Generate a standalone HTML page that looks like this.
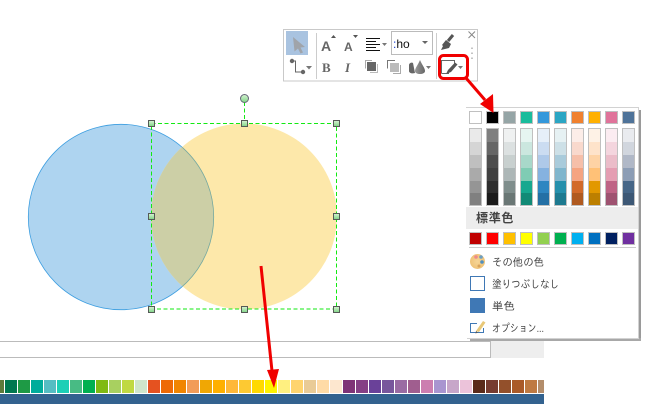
<!DOCTYPE html>
<html><head><meta charset="utf-8"><style>
html,body{margin:0;padding:0;background:#fff;width:666px;height:404px;overflow:hidden}
svg{display:block}
.jp{font-family:"Liberation Sans","IPAGothic","Noto Sans CJK JP",sans-serif;font-size:11px;fill:#444}
</style></head><body>
<svg width="666" height="404" viewBox="0 0 666 404" xmlns="http://www.w3.org/2000/svg" shape-rendering="geometricPrecision">
<defs>
<clipPath id="oy"><circle cx="244" cy="216.5" r="93"/></clipPath>
<linearGradient id="h" x1="0" y1="0" x2="0" y2="1"><stop offset="0" stop-color="#d8f3d4"/><stop offset="1" stop-color="#7fd486"/></linearGradient>
<linearGradient id="dr" x1="0" y1="0" x2="1" y2="0"><stop offset="0" stop-color="#999"/><stop offset="1" stop-color="#666"/></linearGradient>
<radialGradient id="pal" cx=".5" cy=".5" r=".6"><stop offset="0" stop-color="#f6d596"/><stop offset="1" stop-color="#eebf72"/></radialGradient>
</defs>

<!-- bottom area -->
<path d="M0 341.5H490.5V357.5H0" fill="none" stroke="#bbb" stroke-width="1"/>
<rect x="491" y="341" width="53" height="17" fill="#eeeeee"/>
<rect x="0" y="394" width="544" height="10" fill="#33628f"/>
<g>
<rect x="0" y="380" width="4" height="13" fill="#5d7a3a"/>
<rect x="5" y="380" width="12" height="13" fill="#00784f"/>
<rect x="18" y="380" width="12" height="13" fill="#1e9a45"/>
<rect x="31" y="380" width="12" height="13" fill="#00ac9b"/>
<rect x="44" y="380" width="12" height="13" fill="#55bdc3"/>
<rect x="57" y="380" width="12" height="13" fill="#1ccfb6"/>
<rect x="70" y="380" width="12" height="13" fill="#48bb84"/>
<rect x="83" y="380" width="12" height="13" fill="#00b050"/>
<rect x="96" y="380" width="12" height="13" fill="#80ba12"/>
<rect x="109" y="380" width="12" height="13" fill="#a8d060"/>
<rect x="122" y="380" width="12" height="13" fill="#c0d943"/>
<rect x="135" y="380" width="12" height="13" fill="#cfe6cb"/>
<rect x="148" y="380" width="12" height="13" fill="#e55220"/>
<rect x="161" y="380" width="12" height="13" fill="#ee6a05"/>
<rect x="174" y="380" width="12" height="13" fill="#f18500"/>
<rect x="187" y="380" width="12" height="13" fill="#f29c58"/>
<rect x="200" y="380" width="12" height="13" fill="#f0a704"/>
<rect x="213" y="380" width="12" height="13" fill="#ffb000"/>
<rect x="226" y="380" width="12" height="13" fill="#ffb838"/>
<rect x="239" y="380" width="12" height="13" fill="#fdc932"/>
<rect x="252" y="380" width="12" height="13" fill="#ffd900"/>
<rect x="265" y="380" width="12" height="13" fill="#fff200"/>
<rect x="278" y="380" width="12" height="13" fill="#fff080"/>
<rect x="291" y="380" width="12" height="13" fill="#ffd46e"/>
<rect x="304" y="380" width="12" height="13" fill="#e9cb96"/>
<rect x="317" y="380" width="12" height="13" fill="#ffdba6"/>
<rect x="330" y="380" width="12" height="13" fill="#fde7cf"/>
<rect x="343" y="380" width="12" height="13" fill="#7f3377"/>
<rect x="356" y="380" width="12" height="13" fill="#853f85"/>
<rect x="369" y="380" width="12" height="13" fill="#6a4199"/>
<rect x="382" y="380" width="12" height="13" fill="#78569c"/>
<rect x="395" y="380" width="12" height="13" fill="#9a6ba3"/>
<rect x="408" y="380" width="12" height="13" fill="#a05e8f"/>
<rect x="421" y="380" width="12" height="13" fill="#cc7eb0"/>
<rect x="434" y="380" width="12" height="13" fill="#a995d0"/>
<rect x="447" y="380" width="12" height="13" fill="#c7a6c9"/>
<rect x="460" y="380" width="12" height="13" fill="#ecc3da"/>
<rect x="473" y="380" width="12" height="13" fill="#5a2a1a"/>
<rect x="486" y="380" width="12" height="13" fill="#763b30"/>
<rect x="499" y="380" width="12" height="13" fill="#93502b"/>
<rect x="512" y="380" width="12" height="13" fill="#aa5a28"/>
<rect x="525" y="380" width="12" height="13" fill="#bf7a42"/>
<rect x="538" y="380" width="6" height="13" fill="#b38d6b"/>
</g>

<!-- circles -->
<circle cx="121" cy="217" r="92.7" fill="#aed4f0" stroke="#3d9ee0" stroke-width=".8"/>
<circle cx="244" cy="216.5" r="93" fill="#fde8aa"/>
<g clip-path="url(#oy)">
<circle cx="121" cy="217" r="93" fill="#cccfa6"/>
<circle cx="121" cy="217" r="92.7" fill="none" stroke="#76a9a0" stroke-width=".8"/>
</g>

<!-- selection -->
<g fill="none" stroke="#12ea12" stroke-width="1" stroke-dasharray="4 2.5">
<path d="M151.5 123.5H336.5V309H151.5Z" shape-rendering="crispEdges"/>
<path d="M244.5 102V123" shape-rendering="crispEdges"/>
</g>
<circle cx="244.5" cy="98.5" r="4" fill="url(#h)" stroke="#667"/>
<g fill="url(#h)" stroke="#555a56" stroke-width="1" shape-rendering="crispEdges">
<rect x="148.5" y="120.5" width="6" height="6"/>
<rect x="241.5" y="120.5" width="6" height="6"/>
<rect x="333.5" y="120.5" width="6" height="6"/>
<rect x="148.5" y="213.5" width="6" height="6"/>
<rect x="333.5" y="213.5" width="6" height="6"/>
<rect x="148.5" y="306.5" width="6" height="6"/>
<rect x="241.5" y="306.5" width="6" height="6"/>
<rect x="333.5" y="306.5" width="6" height="6"/>
</g>

<!-- toolbar -->
<rect x="283.500" y="29.500" width="194" height="51.500" fill="#fff" stroke="#c9c9c9"/>
<rect x="286" y="31" width="22" height="24" fill="#a9c3e0"/>
<path d="M293 37L305 47L300.500 47.500L303 52.500L300.500 53.500L298 48.500L294.500 51.500Z" fill="#a0a4aa"/>
<path d="M316.500 33V79M436.500 33V79" stroke="#ccc" stroke-width="1"/>
<!-- A A -->
<text x="321" y="51" font-family="'Liberation Sans',sans-serif" font-weight="bold" font-size="14" fill="#666">A</text>
<path d="M331 38H336L333.500 35Z" fill="#555"/>
<text x="344" y="51" font-family="'Liberation Sans',sans-serif" font-weight="bold" font-size="12" fill="#666">A</text>
<path d="M353 35H358L355.500 38Z" fill="#555"/>
<!-- align -->
<path d="M366 38.500H380M366 41.500H376M366 44.500H380M366 47.500H376M366 50.500H380" stroke="#111" stroke-width="1"/>
<path d="M382 43H387L384.500 46Z" fill="#777"/>
<!-- combo -->
<rect x="391.500" y="31.500" width="41" height="23" fill="#fff" stroke="#bbb"/>
<text x="393" y="48" font-family="'Liberation Sans',sans-serif" font-size="12" fill="#111"><tspan fill="#1a3fd0">:</tspan>ho</text>
<path d="M422 41H428L425 44Z" fill="#666"/>
<!-- brush -->
<path d="M446 40L451 44L449 48L441 50L443 46L442 45Z" fill="#555"/>
<path d="M448 41L453 35" stroke="#555" stroke-width="3"/>
<!-- close and grip -->
<path d="M468.500 31.500L475 38M475 31.500L468.500 38" stroke="#888" stroke-width="1"/>
<path d="M472 47.500V49M472 52.500V54M472 57.500V59" stroke="#c4c4c4" stroke-width="2"/>
<!-- connector -->
<circle cx="292" cy="61" r="2.200" fill="#666"/>
<circle cx="303" cy="72" r="2.200" fill="#666"/>
<path d="M292 61H295.500V72H303" fill="none" stroke="#666"/>
<path d="M306 66H312L309 69.500Z" fill="#777"/>
<!-- B I -->
<text x="322" y="72" font-family="'Liberation Serif',serif" font-weight="bold" font-size="13" fill="#666">B</text>
<text x="345" y="72" font-family="'Liberation Serif',serif" font-weight="bold" font-style="italic" font-size="13" fill="#666">I</text>
<!-- layers -->
<path d="M365.500 68.500V60.500H372" fill="none" stroke="#aaa"/>
<rect x="367" y="62" width="9" height="9" fill="#666"/>
<path d="M377.500 64V72.500H370" fill="none" stroke="#bbb"/>
<path d="M387.500 68.500V60.500H395" fill="none" stroke="#777"/>
<rect x="390" y="63" width="9" height="9" fill="#bbb"/>
<path d="M400.500 65V73.500H393" fill="none" stroke="#aaa"/>
<!-- drops -->
<path d="M409 65C409 63 412 62 413 63L415 73C412 74 409 73 409 71Z" fill="#666"/>
<path d="M420 60C418 65 415 68 415 71C415 75 425 75 425 71C425 68 422 65 420 60Z" fill="url(#dr)"/>
<path d="M426 66H431L428.500 69Z" fill="#777"/>
<!-- fill icon -->
<path d="M441.500 73.500V60.500H454.500V64" fill="none" stroke="#666"/>
<path d="M441.500 73.500H449" fill="none" stroke="#666"/>
<path d="M448 70L455 62.500L457.500 64.500L451 72L446 74Z" fill="#555"/>
<path d="M458 66H463L460.500 69Z" fill="#777"/>

<!-- menu -->
<rect x="639" y="110" width="2" height="231" fill="#9a9a9a"/>
<rect x="470" y="338" width="171" height="3" fill="#a8a8a8"/>
<rect x="466" y="107" width="173" height="232" fill="#fff"/>
<path d="M466 107.500H638.500V338.500H467" fill="none" stroke="#d2d2d2"/>
<rect x="466" y="207" width="172" height="22" fill="#ededed"/>
<path d="M469 247.500H636" stroke="#ccc"/>

<g stroke="#c0c0c0" stroke-width="1">
<rect x="469.500" y="111.500" width="12" height="12" fill="#ffffff"/>
<rect x="486.500" y="111.500" width="12" height="12" fill="#000000"/>
<rect x="503.500" y="111.500" width="12" height="12" fill="#95a5a6"/>
<rect x="520.500" y="111.500" width="12" height="12" fill="#1abc9c"/>
<rect x="537.500" y="111.500" width="12" height="12" fill="#3498db"/>
<rect x="554.500" y="111.500" width="12" height="12" fill="#2ba6c4"/>
<rect x="571.500" y="111.500" width="12" height="12" fill="#f0812f"/>
<rect x="588.500" y="111.500" width="12" height="12" fill="#ffb000"/>
<rect x="605.500" y="111.500" width="12" height="12" fill="#e0739a"/>
<rect x="622.500" y="111.500" width="12" height="12" fill="#4f7399"/>

<rect x="469.500" y="232.500" width="12" height="12" fill="#c00000"/>
<rect x="486.500" y="232.500" width="12" height="12" fill="#ff0000"/>
<rect x="503.500" y="232.500" width="12" height="12" fill="#ffc000"/>
<rect x="520.500" y="232.500" width="12" height="12" fill="#ffff00"/>
<rect x="537.500" y="232.500" width="12" height="12" fill="#92d050"/>
<rect x="554.500" y="232.500" width="12" height="12" fill="#00b050"/>
<rect x="571.500" y="232.500" width="12" height="12" fill="#00b0f0"/>
<rect x="588.500" y="232.500" width="12" height="12" fill="#0070c0"/>
<rect x="605.500" y="232.500" width="12" height="12" fill="#002060"/>
<rect x="622.500" y="232.500" width="12" height="12" fill="#7030a0"/>
</g>

<!-- shade columns -->
<g shape-rendering="crispEdges">
<rect x="469" y="128" width="13" height="78" fill="#c0c0c0"/><rect x="486" y="128" width="13" height="78" fill="#c0c0c0"/><rect x="503" y="128" width="13" height="78" fill="#c0c0c0"/><rect x="520" y="128" width="13" height="78" fill="#c0c0c0"/><rect x="537" y="128" width="13" height="78" fill="#c0c0c0"/><rect x="554" y="128" width="13" height="78" fill="#c0c0c0"/><rect x="571" y="128" width="13" height="78" fill="#c0c0c0"/><rect x="588" y="128" width="13" height="78" fill="#c0c0c0"/><rect x="605" y="128" width="13" height="78" fill="#c0c0c0"/><rect x="622" y="128" width="13" height="78" fill="#c0c0c0"/>

<rect x="470" y="129" width="11" height="13" fill="#eaeaea"/><rect x="470" y="142" width="11" height="13" fill="#d5d5d5"/><rect x="470" y="155" width="11" height="13" fill="#bfbfbf"/><rect x="470" y="168" width="11" height="13" fill="#aaaaaa"/><rect x="470" y="181" width="11" height="12" fill="#959595"/><rect x="470" y="193" width="11" height="12" fill="#808080"/>
<rect x="487" y="129" width="11" height="13" fill="#7f7f7f"/><rect x="487" y="142" width="11" height="13" fill="#666666"/><rect x="487" y="155" width="11" height="13" fill="#4d4d4d"/><rect x="487" y="168" width="11" height="13" fill="#404040"/><rect x="487" y="181" width="11" height="12" fill="#2d2d2d"/><rect x="487" y="193" width="11" height="12" fill="#1a1a1a"/>
<rect x="504" y="129" width="11" height="13" fill="#eff1f1"/><rect x="504" y="142" width="11" height="13" fill="#dce1e1"/><rect x="504" y="155" width="11" height="13" fill="#c8d0cf"/><rect x="504" y="168" width="11" height="13" fill="#adb7b7"/><rect x="504" y="181" width="11" height="12" fill="#7f8e8c"/><rect x="504" y="193" width="11" height="12" fill="#6a7775"/>
<rect x="521" y="129" width="11" height="13" fill="#e6f5f1"/><rect x="521" y="142" width="11" height="13" fill="#cbe7df"/><rect x="521" y="155" width="11" height="13" fill="#a8d8ca"/><rect x="521" y="168" width="11" height="13" fill="#7fccb4"/><rect x="521" y="181" width="11" height="12" fill="#17a88f"/><rect x="521" y="193" width="11" height="12" fill="#128a76"/>
<rect x="538" y="129" width="11" height="13" fill="#e6eff9"/><rect x="538" y="142" width="11" height="13" fill="#cbdcf1"/><rect x="538" y="155" width="11" height="13" fill="#aec9e9"/><rect x="538" y="168" width="11" height="13" fill="#85b2e0"/><rect x="538" y="181" width="11" height="12" fill="#2e86c1"/><rect x="538" y="193" width="11" height="12" fill="#2470a5"/>
<rect x="555" y="129" width="11" height="13" fill="#e6f1f3"/><rect x="555" y="142" width="11" height="13" fill="#cde0e7"/><rect x="555" y="155" width="11" height="13" fill="#a9cbdb"/><rect x="555" y="168" width="11" height="13" fill="#80b6cd"/><rect x="555" y="181" width="11" height="12" fill="#2690ac"/><rect x="555" y="193" width="11" height="12" fill="#1e7a90"/>
<rect x="572" y="129" width="11" height="13" fill="#fcede8"/><rect x="572" y="142" width="11" height="13" fill="#f9d9cd"/><rect x="572" y="155" width="11" height="13" fill="#f6bfa9"/><rect x="572" y="168" width="11" height="13" fill="#f5a481"/><rect x="572" y="181" width="11" height="12" fill="#d26a2a"/><rect x="572" y="193" width="11" height="12" fill="#b05a20"/>
<rect x="589" y="129" width="11" height="13" fill="#fef2e6"/><rect x="589" y="142" width="11" height="13" fill="#fee3ca"/><rect x="589" y="155" width="11" height="13" fill="#fed3a5"/><rect x="589" y="168" width="11" height="13" fill="#ffc177"/><rect x="589" y="181" width="11" height="12" fill="#e29800"/><rect x="589" y="193" width="11" height="12" fill="#bc7f00"/>
<rect x="606" y="129" width="11" height="13" fill="#fbecf1"/><rect x="606" y="142" width="11" height="13" fill="#f4d5de"/><rect x="606" y="155" width="11" height="13" fill="#ebbcc9"/><rect x="606" y="168" width="11" height="13" fill="#e49db2"/><rect x="606" y="181" width="11" height="12" fill="#bf6385"/><rect x="606" y="193" width="11" height="12" fill="#9e5270"/>
<rect x="623" y="129" width="11" height="13" fill="#e9ebef"/><rect x="623" y="142" width="11" height="13" fill="#d1d6de"/><rect x="623" y="155" width="11" height="13" fill="#b0b8c7"/><rect x="623" y="168" width="11" height="13" fill="#8c9db5"/><rect x="623" y="181" width="11" height="12" fill="#466687"/><rect x="623" y="193" width="11" height="12" fill="#3d5875"/>
</g>

<text x="476" y="222" font-family="'Liberation Sans','Noto Sans CJK JP',sans-serif" font-weight="bold" font-size="12" letter-spacing=".7" fill="#444">標準色</text>

<!-- menu items -->
<ellipse cx="477.500" cy="261.500" rx="7.500" ry="7.500" fill="url(#pal)"/>
<circle cx="476" cy="257" r="1.800" fill="#ee8a8a"/><circle cx="481" cy="257" r="1.800" fill="#6b9fc4"/><circle cx="482" cy="262" r="1.800" fill="#4f8fc0"/><circle cx="479" cy="266" r="1.500" fill="#d9a35a"/>
<text class="jp" x="492" y="266" textLength="52" lengthAdjust="spacingAndGlyphs">その他の色</text>
<rect x="470.500" y="276.500" width="14" height="14" fill="#fff" stroke="#3f78b5"/>
<text class="jp" x="492" y="288" textLength="67" lengthAdjust="spacingAndGlyphs">塗りつぶしなし</text>
<rect x="470" y="298" width="15" height="15" fill="#3f78b5"/>
<text class="jp" x="492" y="310" textLength="23" lengthAdjust="spacingAndGlyphs">単色</text>
<path d="M477 323.500H470.500V332.500H483.500V328" fill="none" stroke="#3f78b5"/>
<path d="M476 331L483 321L485.500 322.500L479 332Z" fill="#e8c878"/><path d="M476 331L475.500 333.500L478 332.500Z" fill="#555"/>
<text class="jp" x="492" y="332" textLength="52" lengthAdjust="spacingAndGlyphs">オプション...</text>

<!-- red annotations -->
<rect x="439.500" y="55.500" width="28" height="23" rx="4" fill="none" stroke="#f00000" stroke-width="3"/>
<path d="M466 78L485 100" stroke="#f00000" stroke-width="3" fill="none"/>
<polygon points="480,104 493,94 493.500,113" fill="#f00000"/>
<path d="M261 266L272 371" stroke="#f00000" stroke-width="3" fill="none"/>
<polygon points="267,370 279,369 274,388" fill="#f00000"/>
</svg>
</body></html>
